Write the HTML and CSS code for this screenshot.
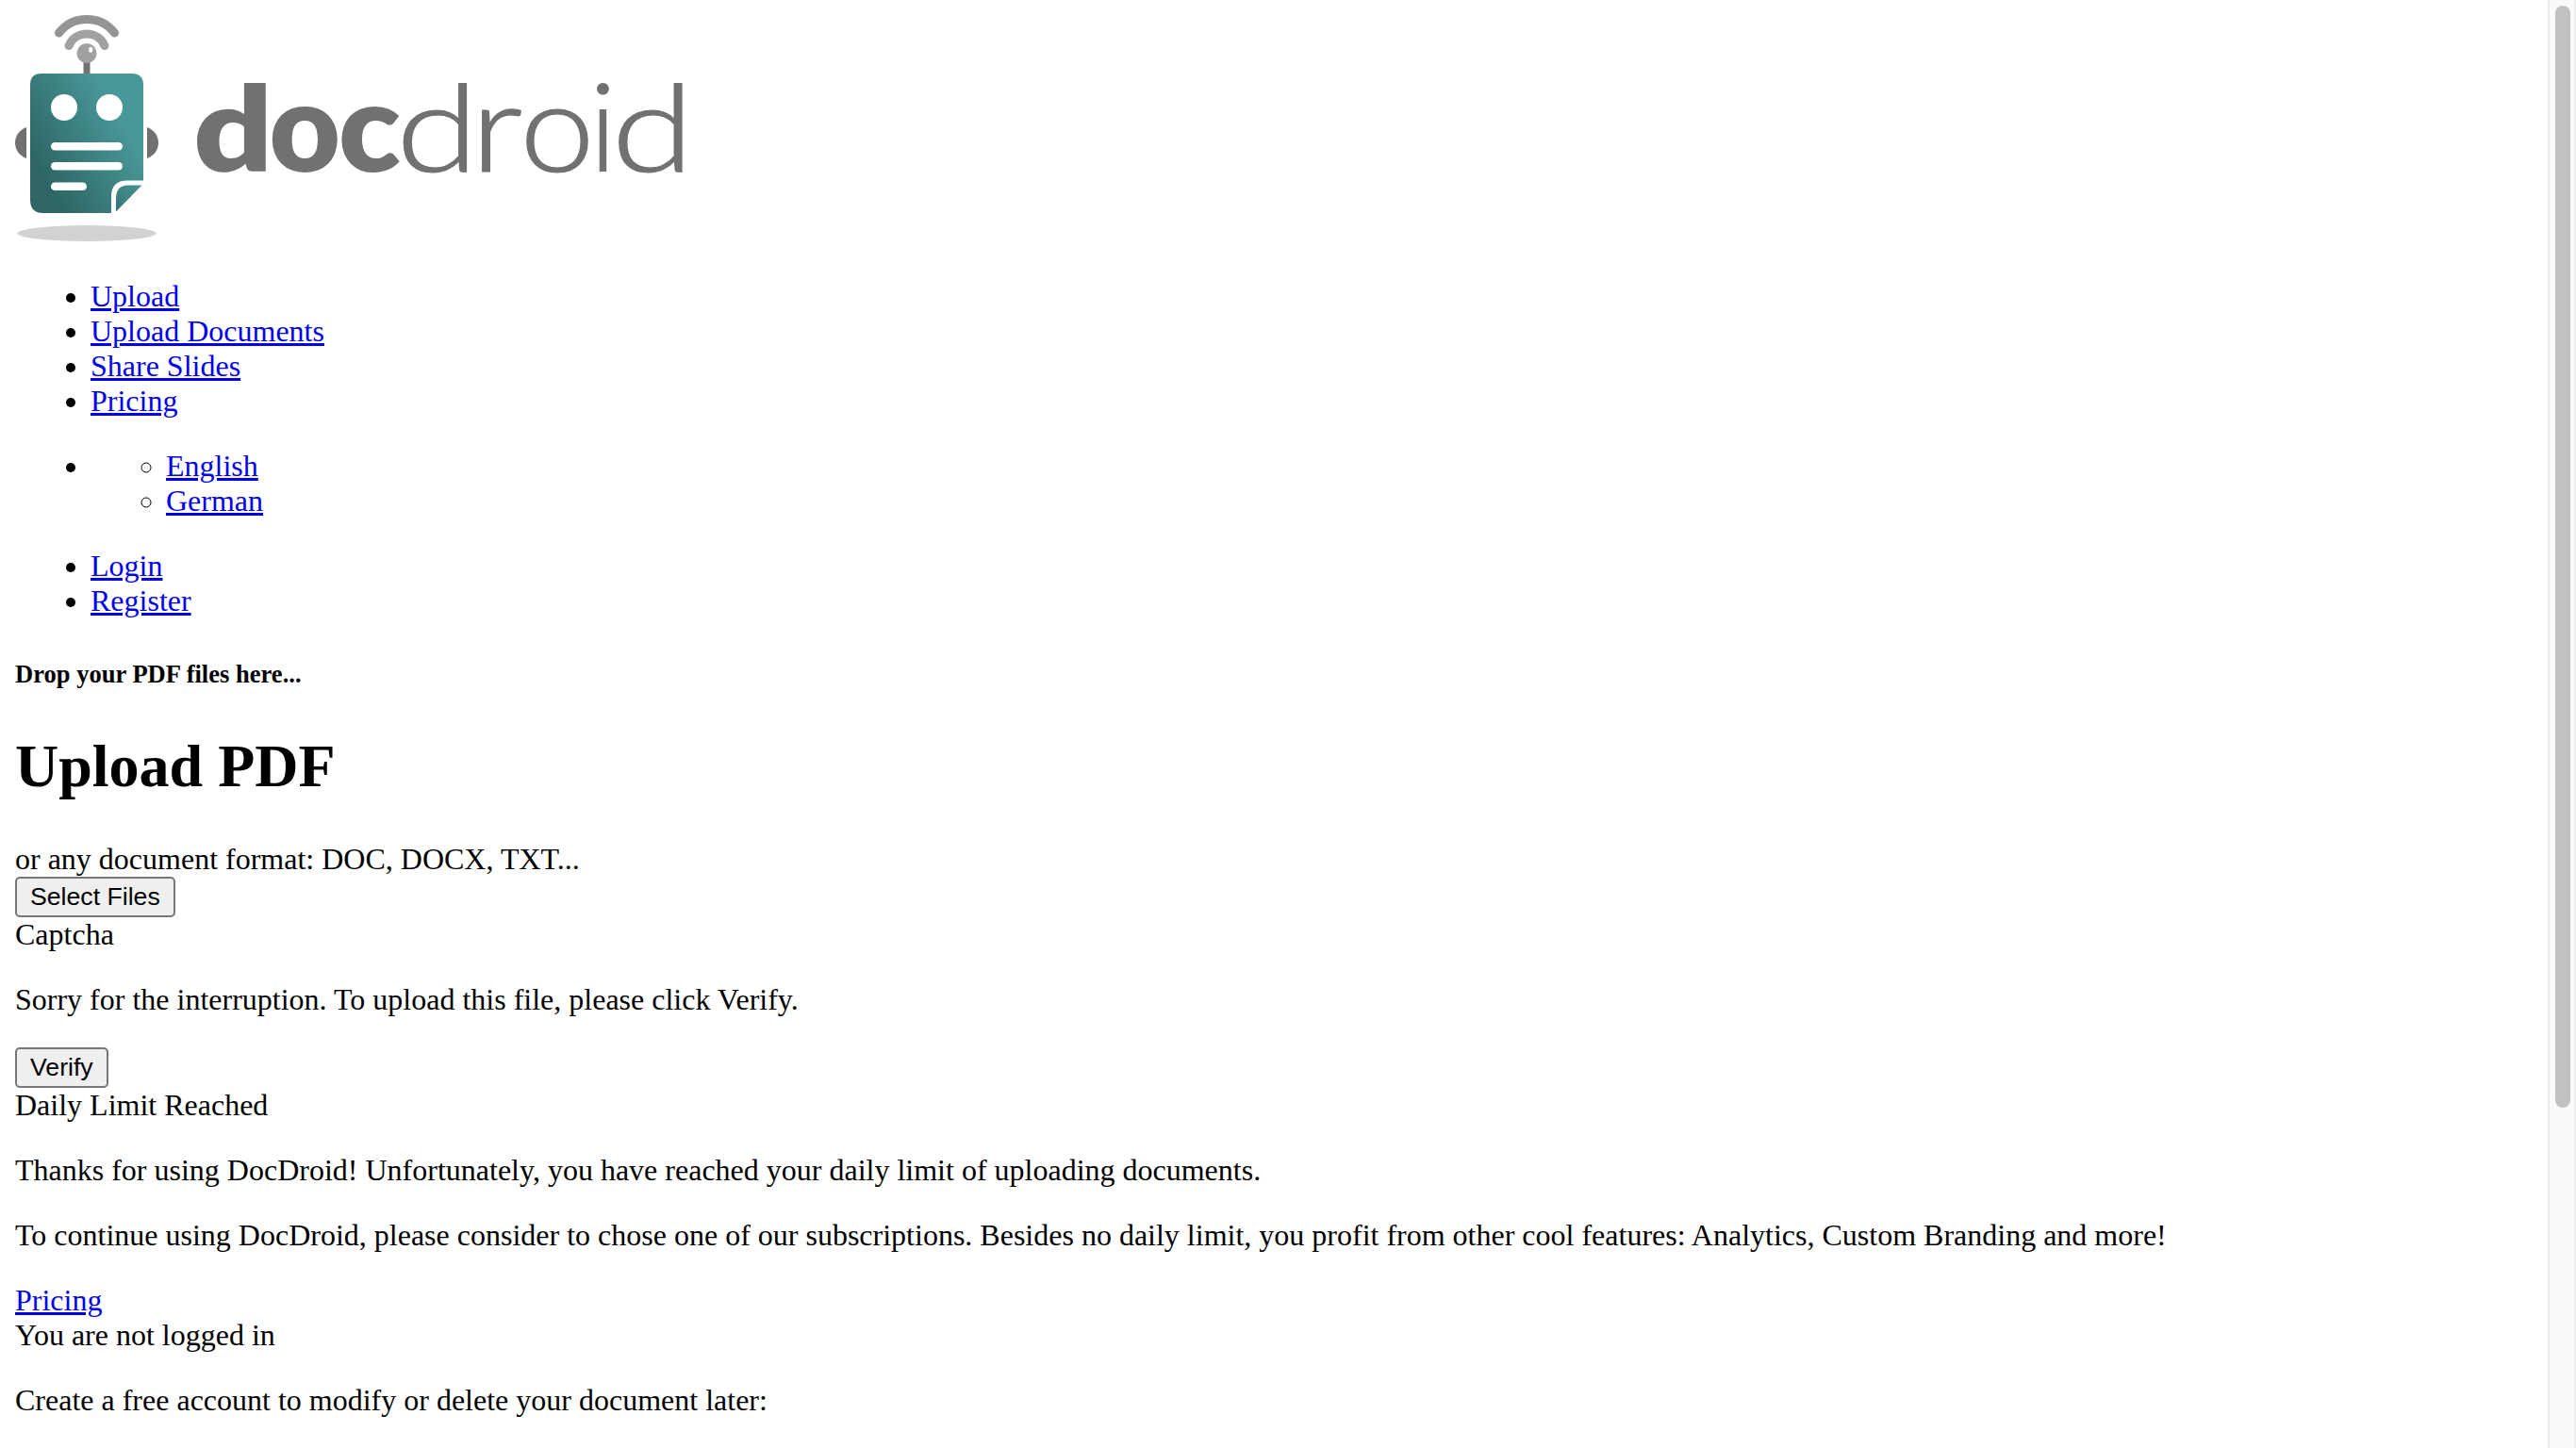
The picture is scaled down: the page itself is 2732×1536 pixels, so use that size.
FILE: index.html
```
<!DOCTYPE html>
<html lang="en">
<head>
<meta charset="utf-8">
<title>DocDroid</title>
<link rel="stylesheet" href="styles.css">
</head>
<body>
<main class="page">
  <a class="logo">
    <svg class="logo-art" viewBox="16 16 712 240" role="img" aria-label="docdroid">
      <defs>
        <linearGradient id="sheet" gradientUnits="userSpaceOnUse" x1="45" y1="184" x2="134" y2="133">
          <stop offset="0" stop-color="#2e6666"/>
          <stop offset="1" stop-color="#499899"/>
        </linearGradient>
        <linearGradient id="fold" gradientUnits="userSpaceOnUse" x1="116" y1="225" x2="146" y2="195">
          <stop offset="0" stop-color="#33706f"/>
          <stop offset="1" stop-color="#479293"/>
        </linearGradient>
      </defs>
      <path d="M62.500 35C77 15.500 107 15.500 121.500 35" fill="none" stroke="#939594" stroke-width="9" stroke-linecap="round"/>
      <path d="M73 48.500C80 31.800 104 31.800 111 48.500" fill="none" stroke="#a0a2a1" stroke-width="9" stroke-linecap="round"/>
      <path d="M88.500 64h7v15h-7z" fill="#717171"/>
      <circle cx="92" cy="56.500" r="10.500" fill="#9fa1a0"/>
      <ellipse cx="96.200" cy="52.800" rx="2.200" ry="3" fill="#fff"/>
      <path d="M28 135c-16 6-16 27 0 33zM156 135c16 6 16 27 0 33z" fill="#717171"/>
      <path d="M44 78h96q12 0 12 12v101.500h-17q-17 0-17 17V226H46q-14 0-14-14V90q0-12 12-12z" fill="url(#sheet)"/>
      <path d="M150.500 196.500l-27.500 28v-14q0-14 13-14z" fill="url(#fold)"/>
      <g fill="#fff">
        <circle cx="68" cy="114" r="14"/>
        <circle cx="116" cy="114" r="14"/>
        <rect x="54" y="151" width="76" height="8.500" rx="4.250"/>
        <rect x="54" y="172" width="76" height="8.500" rx="4.250"/>
        <rect x="54" y="193.500" width="38" height="8.500" rx="4.250"/>
      </g>
      <ellipse cx="92" cy="247.500" rx="73.500" ry="8.500" fill="#d2d2d2"/>
      <g class="word word-bold">
        <text transform="translate(205 182) scale(1.13 .96)">d</text>
        <text transform="translate(285.500 182)">o</text>
        <text transform="translate(359 182) scale(1.04 1)">c</text>
      </g>
      <g class="word word-light">
        <text transform="translate(420 181.500) scale(1.22 .98)">d</text>
        <text transform="translate(499 181.500) scale(1.2 1)">r</text>
        <text transform="translate(551.500 181.500) scale(1.09 1)">o</text>
        <text transform="translate(625 181.500)">i</text>
        <text transform="translate(648.500 181.500) scale(1.22 .98)">d</text>
      </g>
    </svg>
  </a>

  <ul>
    <li><a href="#">Upload</a></li>
    <li><a href="#">Upload Documents</a></li>
    <li><a href="#">Share Slides</a></li>
    <li><a href="#">Pricing</a></li>
  </ul>
  <ul>
    <li>
      <ul>
        <li><a href="#">English</a></li>
        <li><a href="#">German</a></li>
      </ul>
    </li>
  </ul>
  <ul>
    <li><a href="#">Login</a></li>
    <li><a href="#">Register</a></li>
  </ul>

  <h5>Drop your PDF files here...</h5>
  <h1>Upload PDF</h1>
  <div>or any document format: DOC, DOCX, TXT...</div>
  <div class="action"><button class="button">Select Files</button></div>

  <div>Captcha</div>
  <p>Sorry for the interruption. To upload this file, please click Verify.</p>
  <div class="action"><button class="button">Verify</button></div>

  <div>Daily Limit Reached</div>
  <p>Thanks for using DocDroid! Unfortunately, you have reached your daily limit of uploading documents.</p>
  <p>To continue using DocDroid, please consider to chose one of our subscriptions. Besides no daily limit, you profit from other cool features: Analytics, Custom Branding and more!</p>
  <div><a href="#">Pricing</a></div>

  <div>You are not logged in</div>
  <p>Create a free account to modify or delete your document later:</p>
</main>
<div class="scrollbar"><div class="thumb"></div></div>
</body>
</html>
```
FILE: styles.css
```
body {
  display: flex;
  height: 1536px;
  margin: 0;
  overflow: hidden;
  background: #fff;
  color: #000;
  font: 32px/37px "Liberation Serif", "Times New Roman", serif;
}

.page {
  flex: 1;
  padding: 16px;
}

.logo {
  display: block;
  height: 248px;
}

.logo-art {
  display: block;
  width: 712px;
  height: 240px;
  overflow: visible;
}

.word {
  fill: #717171;
  font-family: Lato, sans-serif;
  font-size: 130px;
}

.word-bold {
  font-weight: 800;
}

.word-light {
  font-weight: 300;
  stroke: #717171;
  stroke-width: 1.2px;
}

ul {
  margin: 32px 0;
  padding-left: 80px;
}

ul ul {
  margin: 0;
}

a {
  color: #0000ee;
  text-decoration-thickness: 3px;
}

h5 {
  margin: 44.35px 0;
  font-size: 26.56px;
  line-height: 31px;
}

h1 {
  margin: 42.88px 0;
  font-size: 64px;
  line-height: 74px;
}

p {
  margin: 32px 0;
}

.action {
  display: flex;
}

.button {
  box-sizing: border-box;
  height: 43px;
  padding: 2px 14px;
  border: 2px solid #767676;
  border-radius: 5px;
  background: #efefef;
  color: #000;
  font: 26.67px/30px "Liberation Sans", Arial, sans-serif;
}

.scrollbar {
  box-sizing: border-box;
  width: 30px;
  padding: 6px 4px 0 6px;
  border-left: 2px solid #e8e8e8;
  border-right: 2px solid #ededed;
  background: #fafafa;
}

.thumb {
  width: 16px;
  height: 1169px;
  border-radius: 8px;
  background: #c1c1c1;
}
```
